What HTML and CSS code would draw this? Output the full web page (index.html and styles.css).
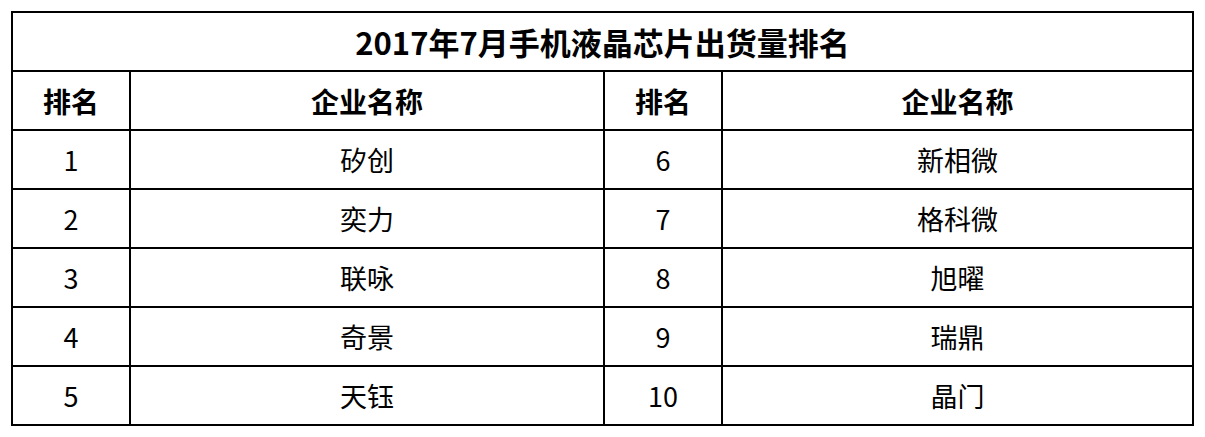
FILE: index.html
```html
<!DOCTYPE html>
<html lang="zh-CN">
<head>
<meta charset="utf-8">
<title>2017年7月手机液晶芯片出货量排名</title>
<link rel="stylesheet" href="styles.css">
</head>
<body>
<div class="sheet">
  <div class="cell title">2017年7月手机液晶芯片出货量排名</div>
  <div class="cell head">排名</div>
  <div class="cell head">企业名称</div>
  <div class="cell head">排名</div>
  <div class="cell head">企业名称</div>

  <div class="cell">1</div><div class="cell">矽创</div><div class="cell">6</div><div class="cell">新相微</div>
  <div class="cell">2</div><div class="cell">奕力</div><div class="cell">7</div><div class="cell">格科微</div>
  <div class="cell">3</div><div class="cell">联咏</div><div class="cell">8</div><div class="cell">旭曜</div>
  <div class="cell">4</div><div class="cell">奇景</div><div class="cell">9</div><div class="cell">瑞鼎</div>
  <div class="cell">5</div><div class="cell">天钰</div><div class="cell">10</div><div class="cell">晶门</div>
</div>
</body>
</html>
```

FILE: styles.css
```css
html, body {
  margin: 0;
  padding: 0;
  background: #ffffff;
}

body {
  padding: 11px 0 0 11px;
  font-family: "Noto Sans CJK SC", "Noto Sans", sans-serif;
  color: #000000;
}

.sheet {
  display: grid;
  grid-template-columns: 116px 472px 116px 469px;
  grid-auto-rows: 57px;
  gap: 2px;
  padding: 2px;
  background: #000000;
  width: max-content;
}

.cell {
  background: #ffffff;
  display: flex;
  align-items: center;
  justify-content: center;
  font-size: 27px;
  line-height: 1;
  font-weight: 400;
}

.title {
  grid-column: 1 / -1;
  font-size: 31px;
  font-weight: 700;
}

.head {
  font-size: 28px;
  font-weight: 700;
}
```
